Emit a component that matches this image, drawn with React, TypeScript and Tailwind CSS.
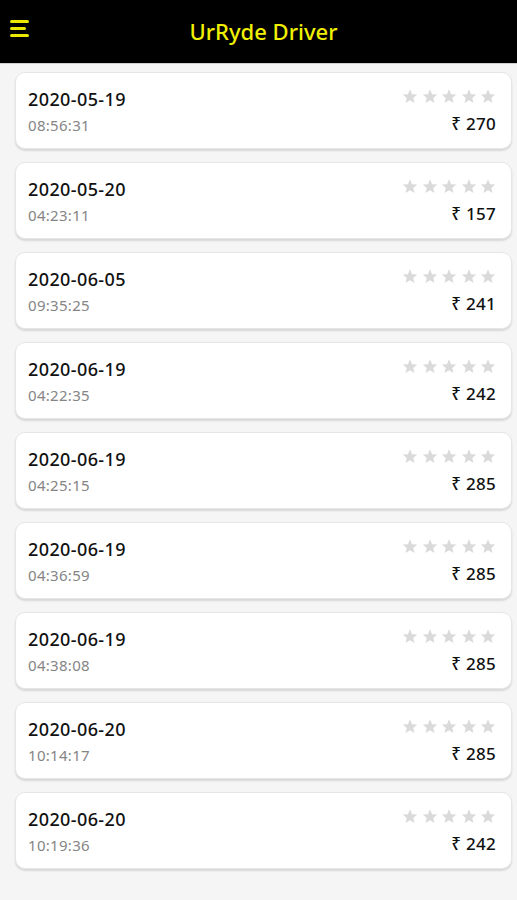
import React from "react";

const rides = [
  { date: "2020-05-19", time: "08:56:31", fare: 270 },
  { date: "2020-05-20", time: "04:23:11", fare: 157 },
  { date: "2020-06-05", time: "09:35:25", fare: 241 },
  { date: "2020-06-19", time: "04:22:35", fare: 242 },
  { date: "2020-06-19", time: "04:25:15", fare: 285 },
  { date: "2020-06-19", time: "04:36:59", fare: 285 },
  { date: "2020-06-19", time: "04:38:08", fare: 285 },
  { date: "2020-06-20", time: "10:14:17", fare: 285 },
  { date: "2020-06-20", time: "10:19:36", fare: 242 },
];

function Star() {
  return (
    <svg width="16" height="15" viewBox="0 0 24 23" className="fill-[#dadada]">
      <path d="M12 0.5l3.1 7.4 7.9 0.6-6 5.2 1.9 7.8L12 17.3l-6.9 4.2 1.9-7.8-6-5.2 7.9-0.6z" />
    </svg>
  );
}

function RideCard({ date, time, fare }: { date: string; time: string; fare: number }) {
  return (
    <div className="flex h-[77px] justify-between rounded-[10px] border border-[#e6e6e6] bg-white pl-[12px] pr-[15px] shadow-[0_2px_2px_rgba(0,0,0,0.12)]">
      <div className="flex flex-col pt-[14px]">
        <p className="text-[18px] leading-[24px] font-medium tracking-[0.4px] text-[#111]">{date}</p>
        <p className="mt-[4px] text-[15px] leading-[20px] tracking-[0.3px] text-[#858585]">{time}</p>
      </div>
      <div className="flex flex-col items-end pt-[16px]">
        <div className="flex gap-[3.5px]">
          {[0, 1, 2, 3, 4].map((i) => (
            <Star key={i} />
          ))}
        </div>
        <p className="mt-[10px] text-[17px] leading-[20px] font-medium tracking-[0.3px] text-[#111]">₹ {fare}</p>
      </div>
    </div>
  );
}

export default function App() {
  return (
    <div className="min-h-[900px] bg-[#f5f5f5] font-['Noto_Sans',sans-serif]">
      <div className="flex h-[64px] items-center border-b border-[#cfcfcf] bg-black">
        <div className="flex w-[40px] flex-col gap-[4px] pb-[6px] pl-[10px]">
          <span className="h-[3px] w-[19px] rounded-full bg-[#e8e800]" />
          <span className="h-[3px] w-[16px] rounded-full bg-[#e8e800]" />
          <span className="h-[3px] w-[19px] rounded-full bg-[#e8e800]" />
        </div>
        <h1 className="flex-1 pr-[30px] text-center text-[22px] font-medium text-[#f0f000]">UrRyde Driver</h1>
      </div>
      <div className="flex flex-col gap-[13px] pt-[8px] pr-[5px] pl-[15px]">
        {rides.map((r, i) => (
          <RideCard key={i} {...r} />
        ))}
      </div>
    </div>
  );
}
